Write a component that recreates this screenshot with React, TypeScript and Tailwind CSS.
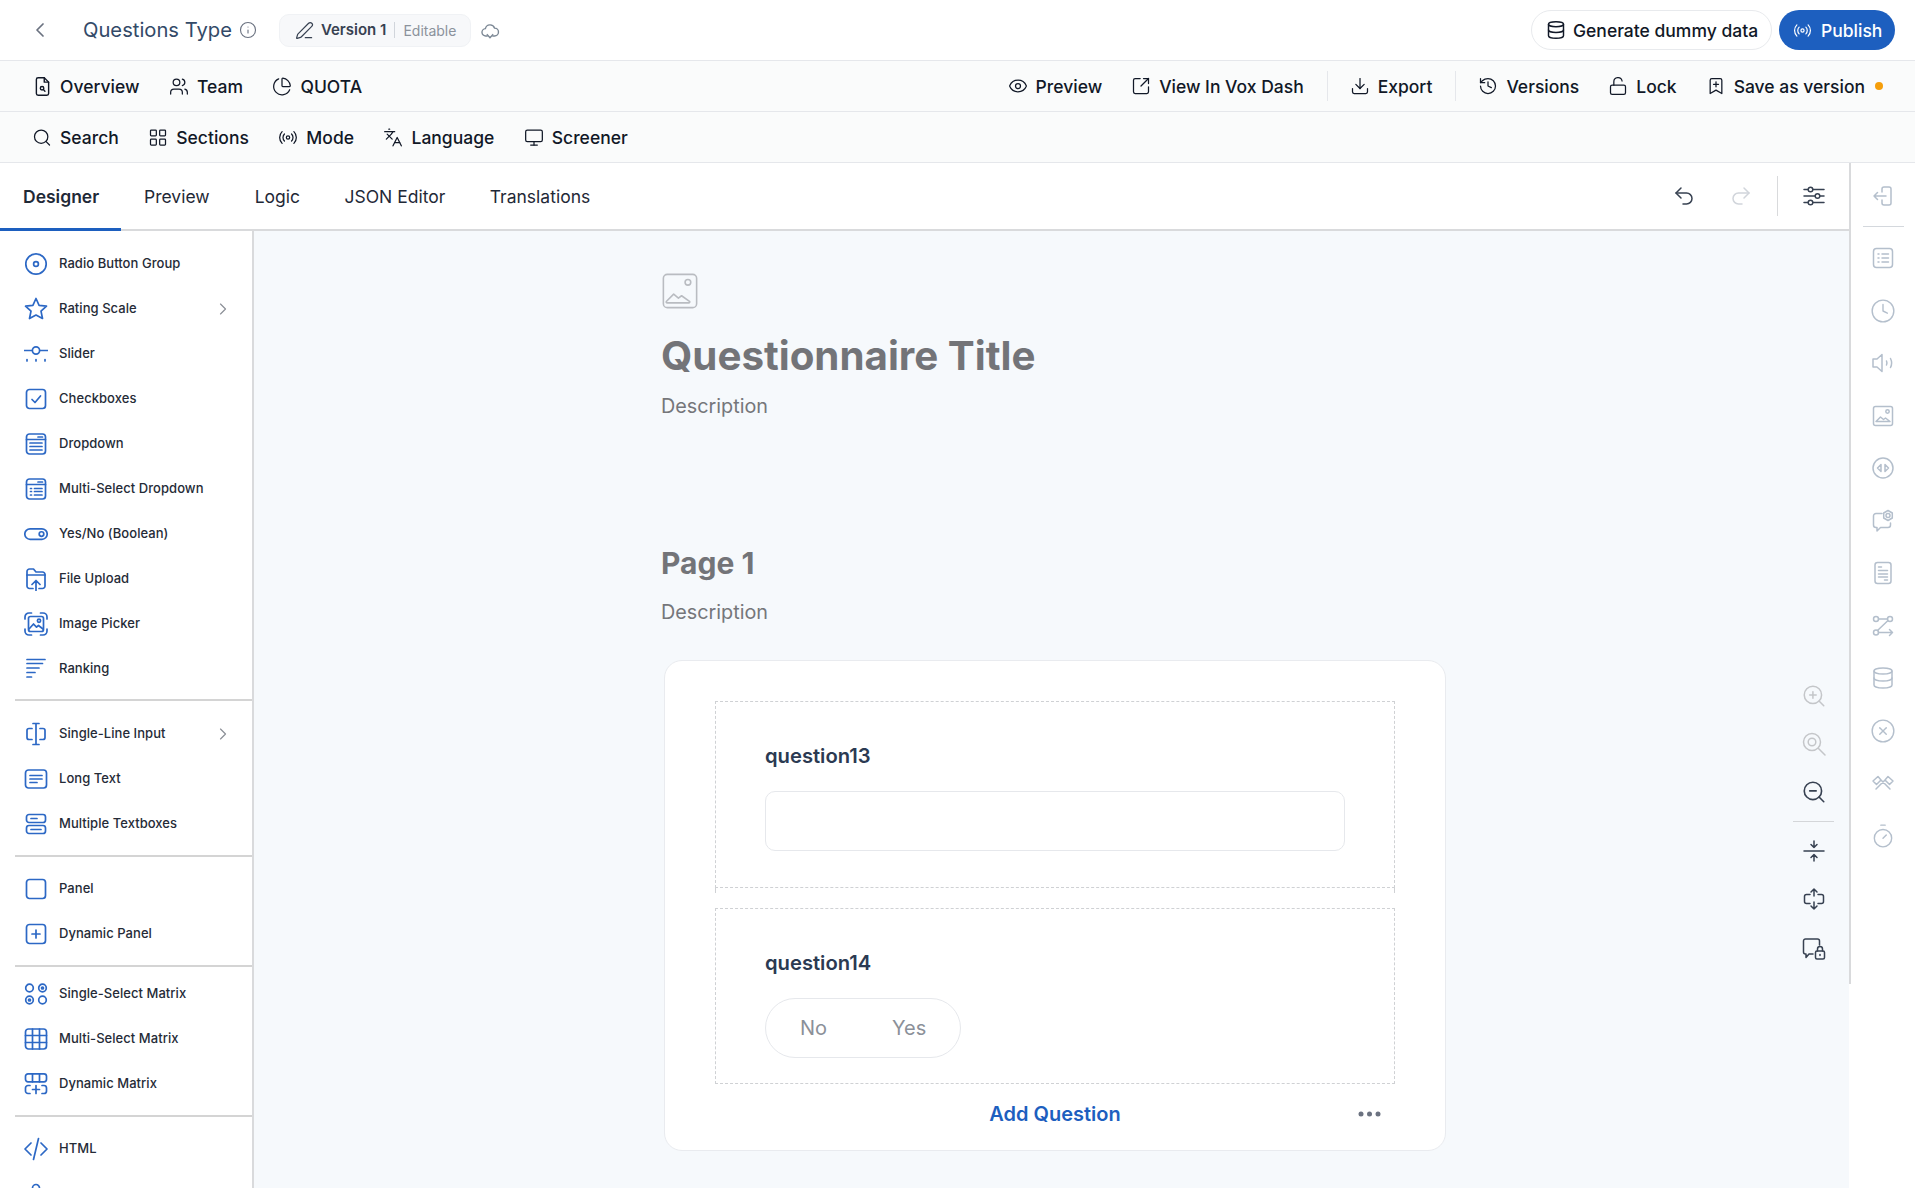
import React from "react";
import {
  ChevronLeft, ChevronRight, Info, Users, ChartPie, Search, LayoutGrid, Radio, Languages, Monitor, Eye,
  SquareArrowOutUpRight, Download, History, LockOpen, BookmarkPlus, Database, Undo2, Redo2,
  Clock, CircleX, Timer, ZoomIn, ZoomOut, PenLine,
} from "lucide-react";

function S({ size = 24, w = 1.5, className = "", children }: { size?: number; w?: number; className?: string; children: React.ReactNode }) {
  return (
    <svg width={size} height={size} viewBox="0 0 24 24" fill="none" stroke="currentColor" strokeWidth={w} strokeLinecap="round" strokeLinejoin="round" className={"shrink-0 " + className}>
      {children}
    </svg>
  );
}

function Nav({ icon, label, className = "" }: { icon: React.ReactNode; label: string; className?: string }) {
  return (
    <div className={"flex items-center gap-2 text-[17.500px] font-medium text-[#111827] " + className}>
      <span className="flex h-5 w-5 items-center justify-center">{icon}</span>
      <span className="whitespace-nowrap pt-[2px]">{label}</span>
    </div>
  );
}

const sideIcons: Record<string, React.ReactNode> = {
  radio: <><circle cx="12" cy="12" r="10.200" /><circle cx="12" cy="12" r="2.400" /></>,
  star: <path d="M12 1.500l3.100 6.800 7.400.9-5.500 5 1.500 7.300L12 18l-6.500 3.500L7 14.200l-5.500-5 7.400-.9z" />,
  slider: <><path d="M0.500 8.500h7.500M16 8.500h7.500" /><circle cx="12" cy="8.500" r="3.600" /><path d="M3 17.500v1.500M12 17.500v1.500M21 17.500v1.500" /></>,
  check: <><rect x="2.500" y="2.500" width="19" height="19" rx="3" /><path d="M8 12.500l3 3 5.500-6.500" /></>,
  dropdown: <><rect x="2.500" y="2" width="19" height="20" rx="3" /><path d="M2.500 7.500h19M14 5h4.500M6 11h12M6 14.500h12M6 18h12" /></>,
  multi: <><rect x="2.500" y="2" width="19" height="20" rx="3" /><path d="M2.500 7.500h19M14 5h4.500M6.500 11.500h1M6.500 14.500h1M6.500 18h1M10.500 11.500h7.500M10.500 14.500h7.500M10.500 18h7.500" /></>,
  toggle: <><rect x="0.800" y="6.800" width="22.400" height="10.500" rx="5.250" /><circle cx="17.500" cy="12.050" r="2.300" /></>,
  upload: <><path d="M9 21.500H5.500A2.500 2.500 0 0 1 3 19V4.500A2.500 2.500 0 0 1 5.500 2h4l2.500 3h6.500A2.500 2.500 0 0 1 21 7.500V19a2.500 2.500 0 0 1-2.500 2.500H15" /><path d="M3 8h18M12 23.500v-10M8 17.500l4-4 4 4" /></>,
  picker: <><path d="M1 7V5a4 4 0 0 1 4-4h2.500M16.500 1H19a4 4 0 0 1 4 4v2M1 17v2a4 4 0 0 0 4 4h2.500M16.500 23H19a4 4 0 0 0 4-4v-2" /><rect x="4.500" y="4.500" width="15" height="15" rx="2" /><circle cx="15" cy="8.800" r="1.600" /><path d="M5 17l4.500-5 3 3.200 2-1.700 4.500 3.500" /></>,
  ranking: <path d="M3 2.500h18M3 6.500h15.500M3 11h12M3 15.500h8M3 20h4.500" strokeWidth="1.700" />,
  single: <path d="M8 6.500H5a2 2 0 0 0-2 2v7a2 2 0 0 0 2 2h3M16 6.500h3a2 2 0 0 1 2 2v7a2 2 0 0 1-2 2h-3M12 1.500v21M9 1.500h6M9 22.500h6" />,
  long: <><rect x="1.500" y="3" width="21" height="18" rx="3" /><path d="M6 8.500h12M6 12h12M6 15.500h7" /></>,
  textboxes: <><rect x="2.500" y="2.500" width="19" height="8" rx="2.500" /><rect x="2.500" y="13.500" width="19" height="8" rx="2.500" /><path d="M7 6.500h6M7 17.500h10" /></>,
  panel: <rect x="2.500" y="2.500" width="19" height="19" rx="3" />,
  dynpanel: <><rect x="2.500" y="2.500" width="19" height="19" rx="3" /><path d="M12 8v8M8 12h8" /></>,
  ssm: <><circle cx="5.500" cy="6" r="3.800" /><circle cx="18.500" cy="6" r="3.800" /><circle cx="18.500" cy="6" r="1" /><circle cx="5.500" cy="18" r="3.800" /><circle cx="5.500" cy="18" r="1" /><circle cx="18.500" cy="18" r="3.800" /></>,
  msm: <><rect x="1.500" y="2" width="21" height="20" rx="3" /><path d="M8.500 2v20M15.500 2v20M1.500 8.500h21M1.500 15.500h21" /></>,
  dyn: <><rect x="1.500" y="1.800" width="21" height="8" rx="2.500" /><path d="M8.500 1.800v8M15.500 1.800v8M6 13.500H4a2.500 2.500 0 0 0-2.500 2.500v3A2.500 2.500 0 0 0 4 21.500h2M18 13.500h2a2.500 2.500 0 0 1 2.500 2.500v3a2.500 2.500 0 0 1-2.500 2.500h-2M12 13.500v8M8.500 17.500h7" /></>,
  html: <path d="M7 6l-6 6 6 6M17 6l6 6-6 6M14.500 1.500l-5 21" />,
  last: <path d="M8.500 14V6a3.500 3.500 0 0 1 7 0v8" />,
};

function SideItem({ icon, label, chev }: { icon: string; label?: string; chev?: boolean }) {
  return (
    <div className="flex h-[45px] items-center pl-[24px] pr-[21px]">
      <S w={1.700} className="text-[#2c68c5]">{sideIcons[icon]}</S>
      <span className="ml-[11px] flex-1 whitespace-nowrap text-[13px] font-medium tracking-[0.050px] text-[#252b37]">{label}</span>
      {chev && <ChevronRight size={20} strokeWidth={1.4} className="-mx-[2px] text-[#8b8f96]" />}
    </div>
  );
}

function Rule({ className = "" }: { className?: string }) {
  return <div className={"ml-[15px] h-[2px] bg-[#d4d4d4] " + className} />;
}

const R = "text-[#b4bfcc]";

export default function App() {
  return (
    <div className="flex h-screen flex-col overflow-hidden bg-white font-['Inter',sans-serif]">
      {/* top row */}
      <div className="flex h-[61px] shrink-0 items-center justify-between border-b border-[#e5e7eb] bg-white pl-[28px] pr-[20px]">
        <div className="flex items-center">
          <ChevronLeft size={24} strokeWidth={1.75} className="text-[#6b7280]" />
          <span className="ml-[31px] text-[20.200px] text-[#334a68]">Questions Type</span>
          <Info size={18} strokeWidth={1.5} className="ml-[7px] text-[#6b7280]" />
          <div className="ml-[22px] flex h-[33px] w-[192px] items-center rounded-[10px] border border-[#f0f2f5] bg-[#f7f8fa] pl-[15px]">
            <PenLine size={19} strokeWidth={1.5} className="text-[#374151]" />
            <span className="ml-[7px] text-[15px] font-semibold text-[#374151]">Version 1</span>
            <span className="ml-[8px] h-[16px] w-px bg-[#d1d5db]" />
            <span className="ml-[8px] text-[14px] text-[#8b929c]">Editable</span>
          </div>
          <S size={22} className="ml-[8px] text-[#7b8794]">
            <path d="M9 18.500H7.500a4 4 0 0 1-.5-8 5.200 5.200 0 0 1 10-.5 4.200 4.200 0 0 1 0 8.500H15" />
            <path d="M9 17l3 3.500 3-3.500" />
          </S>
        </div>
        <div className="flex items-center gap-[7px]">
          <div className="flex h-[40px] w-[241px] items-center gap-[7px] rounded-full border border-[#e8eaed] bg-white pl-[14px] text-[17.500px] font-medium text-[#111827]">
            <Database size={20} strokeWidth={1.75} />
            <span className="whitespace-nowrap pt-[2px]">Generate dummy data</span>
          </div>
          <div className="flex h-[40px] w-[116px] items-center gap-[9px] rounded-full bg-[#1d5fbf] pl-[14px] text-[17.500px] font-medium text-white">
            <Radio size={19} strokeWidth={1.5} />
            <span className="pt-[2px]">Publish</span>
          </div>
        </div>
      </div>

      {/* second row */}
      <div className="flex h-[51px] shrink-0 items-center justify-between border-b border-[#e5e7eb] bg-[#fafbfb] px-[32px]">
        <div className="flex items-center gap-[29.500px]">
          <Nav label="Overview" icon={
            <S size={21} w={1.6}>
              <path d="M14 2H7a2 2 0 0 0-2 2v16a2 2 0 0 0 2 2h10a2 2 0 0 0 2-2V7z" />
              <path d="M14 2v5h5" />
              <circle cx="11.500" cy="14" r="2" />
              <path d="M13 15.500l1.800 1.800" />
            </S>
          } />
          <Nav label="Team" icon={<Users size={21} strokeWidth={1.5} />} />
          <Nav label="QUOTA" icon={<ChartPie size={21} strokeWidth={1.5} />} />
        </div>
        <div className="flex items-center">
          <Nav label="Preview" icon={<Eye size={20} strokeWidth={1.5} />} />
          <Nav label="View In Vox Dash" className="ml-[29px]" icon={<SquareArrowOutUpRight size={20} strokeWidth={1.5} />} />
          <div className="ml-[23px] h-[30px] w-px bg-[#e5e7eb]" />
          <Nav label="Export" className="ml-[22px]" icon={<Download size={20} strokeWidth={1.5} />} />
          <div className="ml-[23px] h-[30px] w-px bg-[#e5e7eb]" />
          <Nav label="Versions" className="ml-[22px]" icon={<History size={20} strokeWidth={1.5} />} />
          <Nav label="Lock" className="ml-[29px]" icon={<LockOpen size={20} strokeWidth={1.5} />} />
          <Nav label="Save as version" className="ml-[29px]" icon={<BookmarkPlus size={20} strokeWidth={1.5} />} />
          <span className="ml-[10px] h-[8px] w-[8px] rounded-full bg-[#f59e0b]" />
        </div>
      </div>

      {/* third row */}
      <div className="flex h-[51px] shrink-0 items-center gap-[29.500px] border-b border-[#e5e7eb] bg-[#fafbfb] pl-[32px]">
        <Nav label="Search" icon={<Search size={21} strokeWidth={1.5} />} />
        <Nav label="Sections" icon={<LayoutGrid size={21} strokeWidth={1.5} />} />
        <Nav label="Mode" icon={<Radio size={21} strokeWidth={1.5} />} />
        <Nav label="Language" icon={<Languages size={21} strokeWidth={1.5} />} />
        <Nav label="Screener" icon={<Monitor size={21} strokeWidth={1.5} />} />
      </div>

      <div className="flex min-h-0 flex-1">
        <div className="flex min-w-0 flex-1 flex-col">
          {/* tabs */}
          <div className="flex h-[68px] shrink-0 border-b-2 border-[#d9dadc] bg-white">
            <div className="relative flex h-[67px] w-[121px] items-center pl-[23px] pt-[2px] text-[17.500px] font-semibold text-[#1f2937]">
              Designer
              <div className="absolute bottom-[-1px] left-0 h-[3px] w-[121px] bg-[#1d5fbf]" />
            </div>
            <div className="flex items-center pt-[2px] text-[17.500px] text-[#1f2937]">
              <span className="ml-[23px]">Preview</span>
              <span className="ml-[45px]">Logic</span>
              <span className="ml-[44.500px]">JSON Editor</span>
              <span className="ml-[44.500px]">Translations</span>
            </div>
            <div className="ml-auto flex items-center pr-[23px]">
              <Undo2 size={24} strokeWidth={1.5} className="text-[#374151]" />
              <Redo2 size={24} strokeWidth={1.5} className="ml-[33.500px] text-[#d1d5db]" />
              <div className="ml-[24px] h-[40px] w-px bg-[#d9dadc]" />
              <S className="ml-[24px] text-[#374151]">
                <path d="M2 5.500h20M2 12h20M2 18.500h20" />
                <circle cx="8.500" cy="5.500" r="2.300" fill="#fff" />
                <circle cx="15.500" cy="12" r="2.300" fill="#fff" />
                <circle cx="8.500" cy="18.500" r="2.300" fill="#fff" />
              </S>
            </div>
          </div>

          <div className="flex min-h-0 flex-1">
            {/* sidebar */}
            <div className="w-[254px] shrink-0 overflow-hidden border-r-2 border-[#d9dadc] bg-white pt-[10px]">
              <SideItem icon="radio" label="Radio Button Group" />
              <SideItem icon="star" label="Rating Scale" chev />
              <SideItem icon="slider" label="Slider" />
              <SideItem icon="check" label="Checkboxes" />
              <SideItem icon="dropdown" label="Dropdown" />
              <SideItem icon="multi" label="Multi-Select Dropdown" />
              <SideItem icon="toggle" label="Yes/No (Boolean)" />
              <SideItem icon="upload" label="File Upload" />
              <SideItem icon="picker" label="Image Picker" />
              <SideItem icon="ranking" label="Ranking" />
              <Rule className="mt-[8px]" />
              <div className="pt-[10px]">
                <SideItem icon="single" label="Single-Line Input" chev />
                <SideItem icon="long" label="Long Text" />
                <SideItem icon="textboxes" label="Multiple Textboxes" />
              </div>
              <Rule className="mt-[9px]" />
              <div className="pt-[9px]">
                <SideItem icon="panel" label="Panel" />
                <SideItem icon="dynpanel" label="Dynamic Panel" />
              </div>
              <Rule className="mt-[9px]" />
              <div className="pt-[4px]">
                <SideItem icon="ssm" label="Single-Select Matrix" />
                <SideItem icon="msm" label="Multi-Select Matrix" />
                <SideItem icon="dyn" label="Dynamic Matrix" />
              </div>
              <Rule className="mt-[9px]" />
              <div className="pt-[9px]">
                <SideItem icon="html" label="HTML" />
                <SideItem icon="last" />
              </div>
            </div>

            {/* canvas */}
            <div className="relative min-w-0 flex-1 overflow-hidden bg-[#f6f9fc] pl-[407px] pt-[42px]">
              <S size={38} w={1} className="-my-px text-[#b9bcc1]">
                <rect x="1.500" y="1.500" width="21" height="21" rx="2.500" />
                <circle cx="17" cy="6.500" r="1.800" />
                <path d="M3.500 18.500l4.500-4.500 3 2.500 2-1.500 5 3.500c.5.500 0 1-.5 1H4c-.7 0-1-.5-.5-1z" />
              </S>
              <div className="mt-[22px] h-[50px] text-[40.300px] font-bold leading-[50px] text-[#737478]">Questionnaire Title</div>
              <div className="mt-[10px] h-[30px] text-[19.800px] leading-[30px] text-[#75767a]">Description</div>
              <div className="mt-[122px] h-[40px] text-[30px] font-bold leading-[40px] text-[#737478]">Page 1</div>
              <div className="mt-[14px] h-[30px] text-[19.800px] leading-[30px] text-[#75767a]">Description</div>

              <div className="ml-[3px] mt-[33px] h-[491px] w-[782px] rounded-[18px] border border-[#e9ebef] bg-white px-[50px] pt-[40px]">
                <div className="h-[187px] border border-dashed border-[#cfd1d4] px-[49px] pt-[40px]">
                  <div className="h-[27px] text-[20.200px] font-semibold leading-[27px] text-[#2b3a52]">question13</div>
                  <div className="mt-[22px] h-[60px] rounded-[10px] border border-[#e6e8ec] bg-white" />
                </div>
                <div className="h-[5px] border-x border-dashed border-[#cfd1d4]" />
                <div className="mt-[15px] h-[176px] border border-dashed border-[#cfd1d4] px-[49px] pt-[40px]">
                  <div className="h-[27px] text-[20.200px] font-semibold leading-[27px] text-[#2b3a52]">question14</div>
                  <div className="mt-[22px] flex h-[60px] w-[196px] items-center rounded-full border border-[#e6e8ec] text-[20px] text-[#8b9099]">
                    <span className="ml-[34px]">No</span>
                    <span className="ml-[65px]">Yes</span>
                  </div>
                </div>
                <div className="mt-[15px] grid grid-cols-[1fr_auto_1fr] items-center">
                  <span />
                  <span className="text-[20px] font-semibold text-[#1d5fbf]">Add Question</span>
                  <svg width="23" height="6" viewBox="0 0 23 6" className="justify-self-end mr-[14px] text-[#6b7280]" fill="currentColor">
                    <circle cx="3" cy="3" r="2.500" /><circle cx="11.500" cy="3" r="2.500" /><circle cx="20" cy="3" r="2.500" />
                  </svg>
                </div>
              </div>

              {/* floating tools */}
              <div className="absolute right-[15px] top-[453px] flex w-[41px] flex-col items-center gap-[24px] text-[#374151]">
                <ZoomIn size={26} strokeWidth={1.4} className="-m-px text-[#c4c6c9]" />
                <S className="text-[#c4c6c9]"><circle cx="10" cy="10" r="8.500" /><circle cx="10" cy="10" r="3.800" /><path d="M16.500 16.500l6.500 6.500" /></S>
                <ZoomOut size={26} strokeWidth={1.5} className="-m-px" />
                <div className="my-[-7px] h-px w-[41px] bg-[#d4d6d9]" />
                <S>
                  <path d="M2 12h20M12 2v6.500M9 5.500l3 3 3-3M12 22v-6.500M9 18.500l3-3 3 3" />
                </S>
                <S>
                  <path d="M8 7.500H4.500A2 2 0 0 0 2.500 9.500v5a2 2 0 0 0 2 2H8M16 7.500h3.500a2 2 0 0 1 2 2v5a2 2 0 0 1-2 2H16M12 2v7M9 5l3-3 3 3M12 22v-7M9 19l3 3 3-3" />
                </S>
                <S className="mt-[2px]">
                  <path d="M11 17H7l-3 3.500V17H3.500a2 2 0 0 1-2-2V4a2 2 0 0 1 2-2h12a2 2 0 0 1 2 2v4" />
                  <rect x="13.500" y="14" width="9" height="8" rx="1.500" />
                  <path d="M15.500 14v-2a2.500 2.500 0 0 1 5 0v2" />
                  <path d="M18 17.500v1" />
                </S>
              </div>
            </div>
          </div>
        </div>

        {/* right rail */}
        <div className="w-[66px] shrink-0 bg-white">
          <div className="flex h-[821px] flex-col items-center border-l-2 border-[#d9dadc] pt-[21px]">
            <S className={R}>
              <path d="M11 8V5a2 2 0 0 1 2-2h5a2 2 0 0 1 2 2v14a2 2 0 0 1-2 2h-5a2 2 0 0 1-2-2v-3M15 12H3M6.500 8.500L3 12l3.500 3.500" />
            </S>
            <div className="mt-[18px] h-px w-[41px] bg-[#d4d8dd]" />
            <div className="mt-[19px] flex flex-col items-center gap-[28.500px]">
              <S className={R}><rect x="2.500" y="2.500" width="19" height="19" rx="3" /><path d="M7 8h1M11 8h6.500M7 12h1M11 12h6.500M7 16h1M11 16h6.500" /></S>
              <Clock size={26} strokeWidth={1.3} className={"-m-px " + R} />
              <S className={R}><path d="M11 3.500L6 8H2v8h4l5 4.500zM15.500 10c.6 1.300.6 2.700 0 4M19.500 7.500c1.500 3 1.500 6 0 9" /></S>
              <S className={R}><rect x="2.500" y="2.500" width="19" height="19" rx="2" /><circle cx="16.500" cy="7.500" r="1.700" /><path d="M5 17.500l4.500-4.500 3 2.500 2-1.500 4.500 3.500z" /></S>
              <S className={R}><circle cx="12" cy="12" r="10" /><path d="M10 8.500L6.500 12l3.500 3.500zM14 8.500l3.500 3.500-3.500 3.500z" /></S>
              <S className={R}><path d="M11 4.500H5a2.500 2.500 0 0 0-2.500 2.500v9A2.500 2.500 0 0 0 5 18.500h1v3.500l3.500-3.500H17a2.500 2.500 0 0 0 2.500-2.500v-2" /><circle cx="17" cy="6.500" r="2" /><path d="M17 1.500l4.300 2.500v5L17 11.500l-4.300-2.500V4z" /></S>
              <S className={R}><rect x="4" y="1.500" width="16" height="21" rx="2.500" /><path d="M7.500 6h3M7.500 9.500h9M7.500 13h9M7.500 16h9M13.500 19h3" /></S>
              <S className={R}><circle cx="5" cy="5" r="2.500" /><circle cx="5" cy="18.500" r="2.500" /><circle cx="19" cy="5" r="2.500" /><path d="M7.500 5H16.500M16.500 7l-10 9.500M7.500 18.500h14M18.500 15.500l3 3-3 3" /></S>
              <Database size={24} strokeWidth={1.5} className={R} />
              <CircleX size={26} strokeWidth={1.3} className={"-m-px " + R} />
              <S className={R}><path d="M7 5.500L2 10l3.500 3.500L10 9zM17 5.500L22 10l-3.500 3.500L14 9zM10 9l9 9M14 9l-9 9" /></S>
              <Timer size={26} strokeWidth={1.3} className={"-m-px " + R} />
            </div>
          </div>
        </div>
      </div>
    </div>
  );
}
